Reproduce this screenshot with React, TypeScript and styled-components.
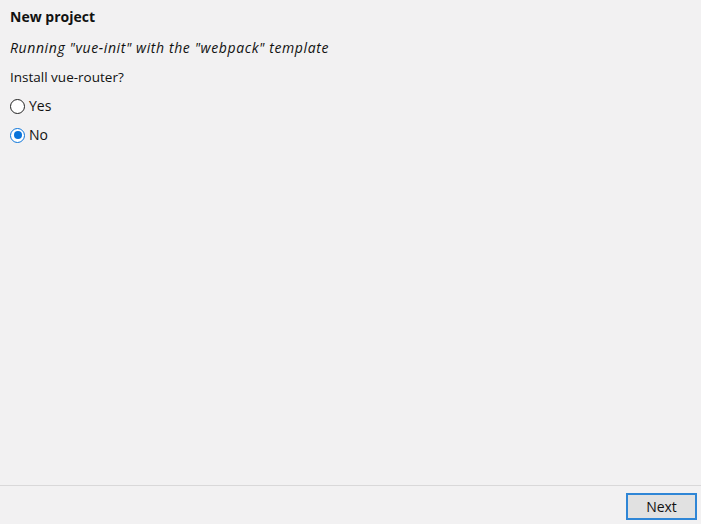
import * as React from 'react'
import styled, { createGlobalStyle } from 'styled-components'

const GlobalStyle = createGlobalStyle`
  html, body {
    margin: 0;
    padding: 0;
    background: #f2f1f2;
  }
  body {
    font-family: "Open Sans", "Noto Sans", sans-serif;
    font-size: 13px;
    color: #111;
  }
`

const Window = styled.div`
  display: flex;
  flex-direction: column;
  width: 701px;
  height: 524px;
  background: #f2f1f2;
`

const Content = styled.div`
  flex: 1;
  display: flex;
  flex-direction: column;
  padding: 7px 10px 0 10px;
`

const Title = styled.div`
  font-weight: 700;
  font-size: 14px;
  line-height: 20px;
  height: 20px;
  margin-bottom: 11px;
`

const Subtitle = styled.div`
  font-style: italic;
  font-size: 14px;
  letter-spacing: 0.6px;
  line-height: 20px;
  margin-bottom: 9px;
`

const Question = styled.div`
  font-size: 13.5px;
  line-height: 20px;
  margin-bottom: 8px;
`

const Option = styled.label`
  display: flex;
  align-items: center;
  gap: 4px;
  font-size: 14px;
  line-height: 20px;
  height: 20px;
  margin-bottom: 8px;
  padding-top: 1px;
`

const RadioCircle = styled.span<{ $checked?: boolean }>`
  box-sizing: border-box;
  width: 15px;
  height: 15px;
  border-radius: 50%;
  border: 1px solid ${ p => p.$checked ? '#0a74da' : '#222' };
  background: #fff;
  display: flex;
  align-items: center;
  justify-content: center;

  &::after {
    content: '';
    display: ${ p => p.$checked ? 'block' : 'none' };
    width: 8px;
    height: 8px;
    border-radius: 50%;
    background: #0a74da;
  }
`

const Footer = styled.div`
  display: flex;
  justify-content: flex-end;
  border-top: 1px solid #d9d8d9;
  padding: 7px 4px 4px 0;
`

const Button = styled.button`
  box-sizing: border-box;
  width: 71px;
  height: 27px;
  font-family: inherit;
  font-size: 14px;
  color: #111;
  background: #e1e1e1;
  border: 2px solid #2f86d6;
  border-radius: 0;
  padding: 0;
`

const App = () => {
  return (
    <Window>
      <GlobalStyle/>
      <Content>
        <Title>New project</Title>
        <Subtitle>Running "vue-init" with the "webpack" template</Subtitle>
        <Question>Install vue-router?</Question>
        <Option><RadioCircle/>Yes</Option>
        <Option><RadioCircle $checked/>No</Option>
      </Content>
      <Footer>
        <Button>Next</Button>
      </Footer>
    </Window>
  )
}

export default App
